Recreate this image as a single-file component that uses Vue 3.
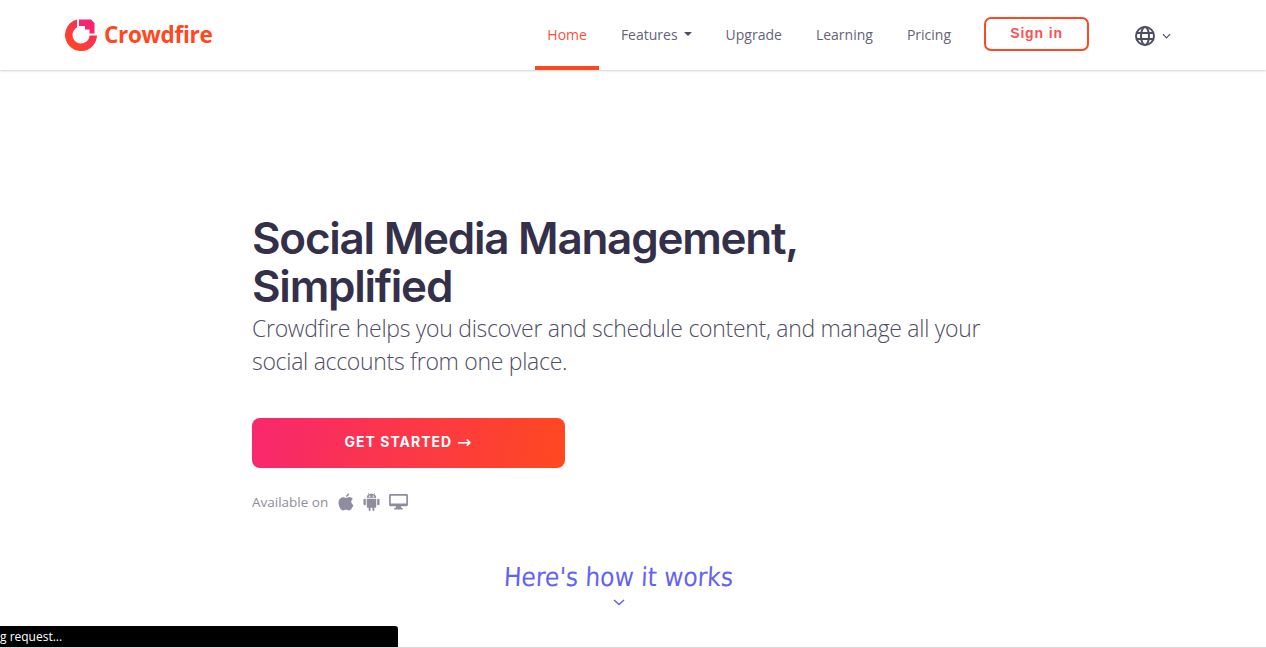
<template>
  <div class="page">
    <!-- top navigation -->
    <header class="topbar">
      <a class="brand">
        <svg class="brand-mark" viewBox="0 0 32 32" width="32" height="32">
          <defs>
            <linearGradient id="markFill" gradientUnits="userSpaceOnUse" x1="30" y1="2" x2="4" y2="30">
              <stop offset="0" stop-color="#f8256e" />
              <stop offset="1" stop-color="#ff4820" />
            </linearGradient>
          </defs>
          <path fill="url(#markFill)" d="M12 0.500 A16 16 0 1 0 32 16.500 L24.500 16.500 A8.500 8.500 0 1 1 12 8.500 Z" />
          <path fill="#f8256e" d="M14 0.500 H26 L29.500 4 V14.500 H24.500 V10.500 H20 V7 H14 Z" />
        </svg>
        <span class="brand-name">Crowdfire</span>
      </a>
      <nav class="nav">
        <a v-for="item in navItems" :key="item.label" :class="['nav-link', { active: item.active }]">
          {{ item.label }}<i v-if="item.caret" class="caret"></i>
        </a>
        <a class="signin">Sign in</a>
        <span class="lang">
          <svg viewBox="0 0 20 20" width="20" height="20" fill="none" stroke="#4f4d63" stroke-width="2">
            <circle cx="10" cy="10" r="9" />
            <ellipse cx="10" cy="10" rx="4" ry="9" />
            <path d="M1.600 7 H18.400 M1.600 13 H18.400" />
          </svg>
          <svg viewBox="0 0 10 6" width="9" height="6" fill="none" stroke="#4f4d63" stroke-width="1.300">
            <path d="M1 1 L5 5 L9 1" />
          </svg>
        </span>
      </nav>
    </header>

    <!-- hero -->
    <main class="hero">
      <h1>Social Media Management,<br />Simplified</h1>
      <p class="lead">Crowdfire helps you discover and schedule content, and manage all your social accounts from one place.</p>
      <a class="cta">GET STARTED <span class="arrow">→</span></a>
      <div class="platforms">
        <span class="platforms-label">Available on</span>
        <svg viewBox="0 0 16 18" width="16" height="18" fill="#8f8d9d">
          <path d="M11.200 0.400 C11.300 2.300 9.800 4 8 3.900 C7.900 2.200 9.400 0.600 11.200 0.400 Z M8.100 4.900 C9 4.900 10 4.100 11.400 4.100 C12.800 4.200 14 4.800 14.800 6 C12.400 7.500 12.900 10.900 15.500 11.900 C14.800 13.900 12.900 17.500 11 17.500 C9.800 17.500 9.500 16.800 8 16.800 C6.500 16.800 6.100 17.500 5 17.500 C2.900 17.500 0.500 13.400 0.500 10 C0.500 6.500 2.700 4.300 4.900 4.200 C6.200 4.200 7.200 4.900 8.100 4.900 Z" />
        </svg>
        <svg viewBox="0 0 18 20" width="17" height="19" fill="#8f8d9d">
          <path d="M4 7 H14 V15.500 A1 1 0 0 1 13 16.500 H12 V19 A1 1 0 0 1 10 19 V16.500 H8 V19 A1 1 0 0 1 6 19 V16.500 H5 A1 1 0 0 1 4 15.500 Z" />
          <rect x="0.500" y="7" width="2.500" height="7" rx="1.200" />
          <rect x="15" y="7" width="2.500" height="7" rx="1.200" />
          <path d="M4 6 C4 4 5 3 6 2.500 L5.200 1 L5.700 0.700 L6.600 2.200 C8 1.700 10 1.700 11.400 2.200 L12.300 0.700 L12.800 1 L12 2.500 C13 3 14 4 14 6 Z M7 3.800 A0.600 0.600 0 1 0 7 4.900 A0.600 0.600 0 1 0 7 3.800 Z M11 3.800 A0.600 0.600 0 1 0 11 4.900 A0.600 0.600 0 1 0 11 3.800 Z" fill-rule="evenodd" />
        </svg>
        <svg viewBox="0 0 20 18" width="19" height="17" fill="#8f8d9d">
          <path fill-rule="evenodd" d="M1.500 1 H18.500 A1.500 1.500 0 0 1 20 2.500 V12.500 A1.500 1.500 0 0 1 18.500 14 H12.500 L13.200 16 H14.500 V17.500 H5.500 V16 H6.800 L7.500 14 H1.500 A1.500 1.500 0 0 1 0 12.500 V2.500 A1.500 1.500 0 0 1 1.500 1 Z M1.800 2.800 V11 H18.200 V2.800 Z" />
        </svg>
      </div>
      <div class="how">
        <span class="how-text">Here's how it works</span>
        <svg viewBox="0 0 12 7" width="12" height="7" fill="none" stroke="#6462f5" stroke-width="1.500">
          <path d="M1 1 L6 5.500 L11 1" />
        </svg>
      </div>
    </main>

    <!-- status bar from the browser -->
    <div class="status">g request...</div>
  </div>
</template>

<script setup>
const navItems = [
  { label: 'Home', active: true },
  { label: 'Features', caret: true },
  { label: 'Upgrade' },
  { label: 'Learning' },
  { label: 'Pricing' },
]
</script>

<style>
html,
body {
  margin: 0;
  background: #fff;
}
</style>

<style scoped>
.page {
  position: relative;
  height: 648px;
  overflow: hidden;
  font-family: 'Open Sans', sans-serif;
  background: #fff;
  box-sizing: border-box;
  border-bottom: 1px solid #d9d9d9;
}

.topbar {
  height: 70px;
  display: flex;
  align-items: stretch;
  justify-content: space-between;
  padding: 0 95px 0 65px;
  box-shadow: 0 1px 2px rgba(0, 0, 0, 0.18);
}

.brand {
  display: flex;
  align-items: center;
  gap: 8px;
}

.brand-mark {
  display: block;
}

.brand-name {
  font-weight: 700;
  font-size: 22.500px;
  letter-spacing: -0.300px;
  color: #ff4820;
  margin-left: -1px;
  margin-top: -2px;
}

.nav {
  display: flex;
  align-items: stretch;
}

.nav-link {
  display: flex;
  align-items: center;
  box-sizing: border-box;
  padding: 0 12px 2px;
  margin-right: 10px;
  font-size: 14px;
  color: #65637a;
  border-bottom: 4px solid transparent;
  border-top: 4px solid transparent;
}

.nav-link.active {
  color: #ff4f3a;
  border-bottom-color: #ff4820;
}

.caret {
  width: 0;
  height: 0;
  margin-left: 6px;
  border-left: 4px solid transparent;
  border-right: 4px solid transparent;
  border-top: 4px solid #4f4d63;
}

.signin {
  align-self: center;
  box-sizing: border-box;
  width: 105px;
  height: 34px;
  margin: 0 0 2px 11px;
  padding-bottom: 2px;
  display: flex;
  align-items: center;
  justify-content: center;
  border: 2px solid #ff4820;
  border-radius: 7px;
  font-family: 'Liberation Sans', sans-serif;
  font-size: 14px;
  font-weight: 700;
  letter-spacing: 0.850px;
  color: #ff5050;
}

.lang {
  display: flex;
  align-items: center;
  gap: 7px;
  margin-left: 46px;
  padding-top: 1px;
}

.hero {
  padding: 144px 0 0 252px;
}

h1 {
  margin: 0;
  font-family: Inter, sans-serif;
  font-weight: 600;
  font-size: 44px;
  line-height: 48px;
  letter-spacing: -1.250px;
  color: #35304a;
}

.lead {
  width: 740px;
  margin: 2px 0 0;
  font-weight: 300;
  font-size: 23px;
  line-height: 33px;
  letter-spacing: -0.290px;
  color: #4f4d63;
}

.cta {
  display: flex;
  align-items: center;
  justify-content: center;
  gap: 5px;
  box-sizing: border-box;
  width: 313px;
  height: 50px;
  margin-top: 40px;
  padding-bottom: 3px;
  border-radius: 8px;
  background: linear-gradient(100deg, #f8276e 0%, #ff4820 100%);
  color: #fff;
  font-family: Inter, sans-serif;
  font-weight: 700;
  font-size: 14px;
  letter-spacing: 1px;
}

.arrow {
  font-family: 'DejaVu Sans', sans-serif;
  font-weight: 400;
  font-size: 17px;
}

.platforms {
  display: flex;
  align-items: center;
  gap: 9px;
  margin-top: 24px;
  font-size: 13.500px;
  color: #8f8d9d;
}

.platforms-label {
  margin-right: 1px;
}

.how {
  width: 734px;
  margin-top: 50px;
  display: flex;
  flex-direction: column;
  align-items: center;
  gap: 6px;
}

.how-text {
  font-family: 'DejaVu Sans Condensed', 'DejaVu Sans', sans-serif;
  font-size: 26px;
  line-height: 32px;
  color: #6462f5;
  transform: skewX(-3deg);
}

.status {
  position: absolute;
  left: 0;
  bottom: 0;
  width: 398px;
  height: 21px;
  border-top-right-radius: 3px;
  background: #000;
  color: #fff;
  font-size: 12px;
  line-height: 21px;
  white-space: nowrap;
}
</style>
